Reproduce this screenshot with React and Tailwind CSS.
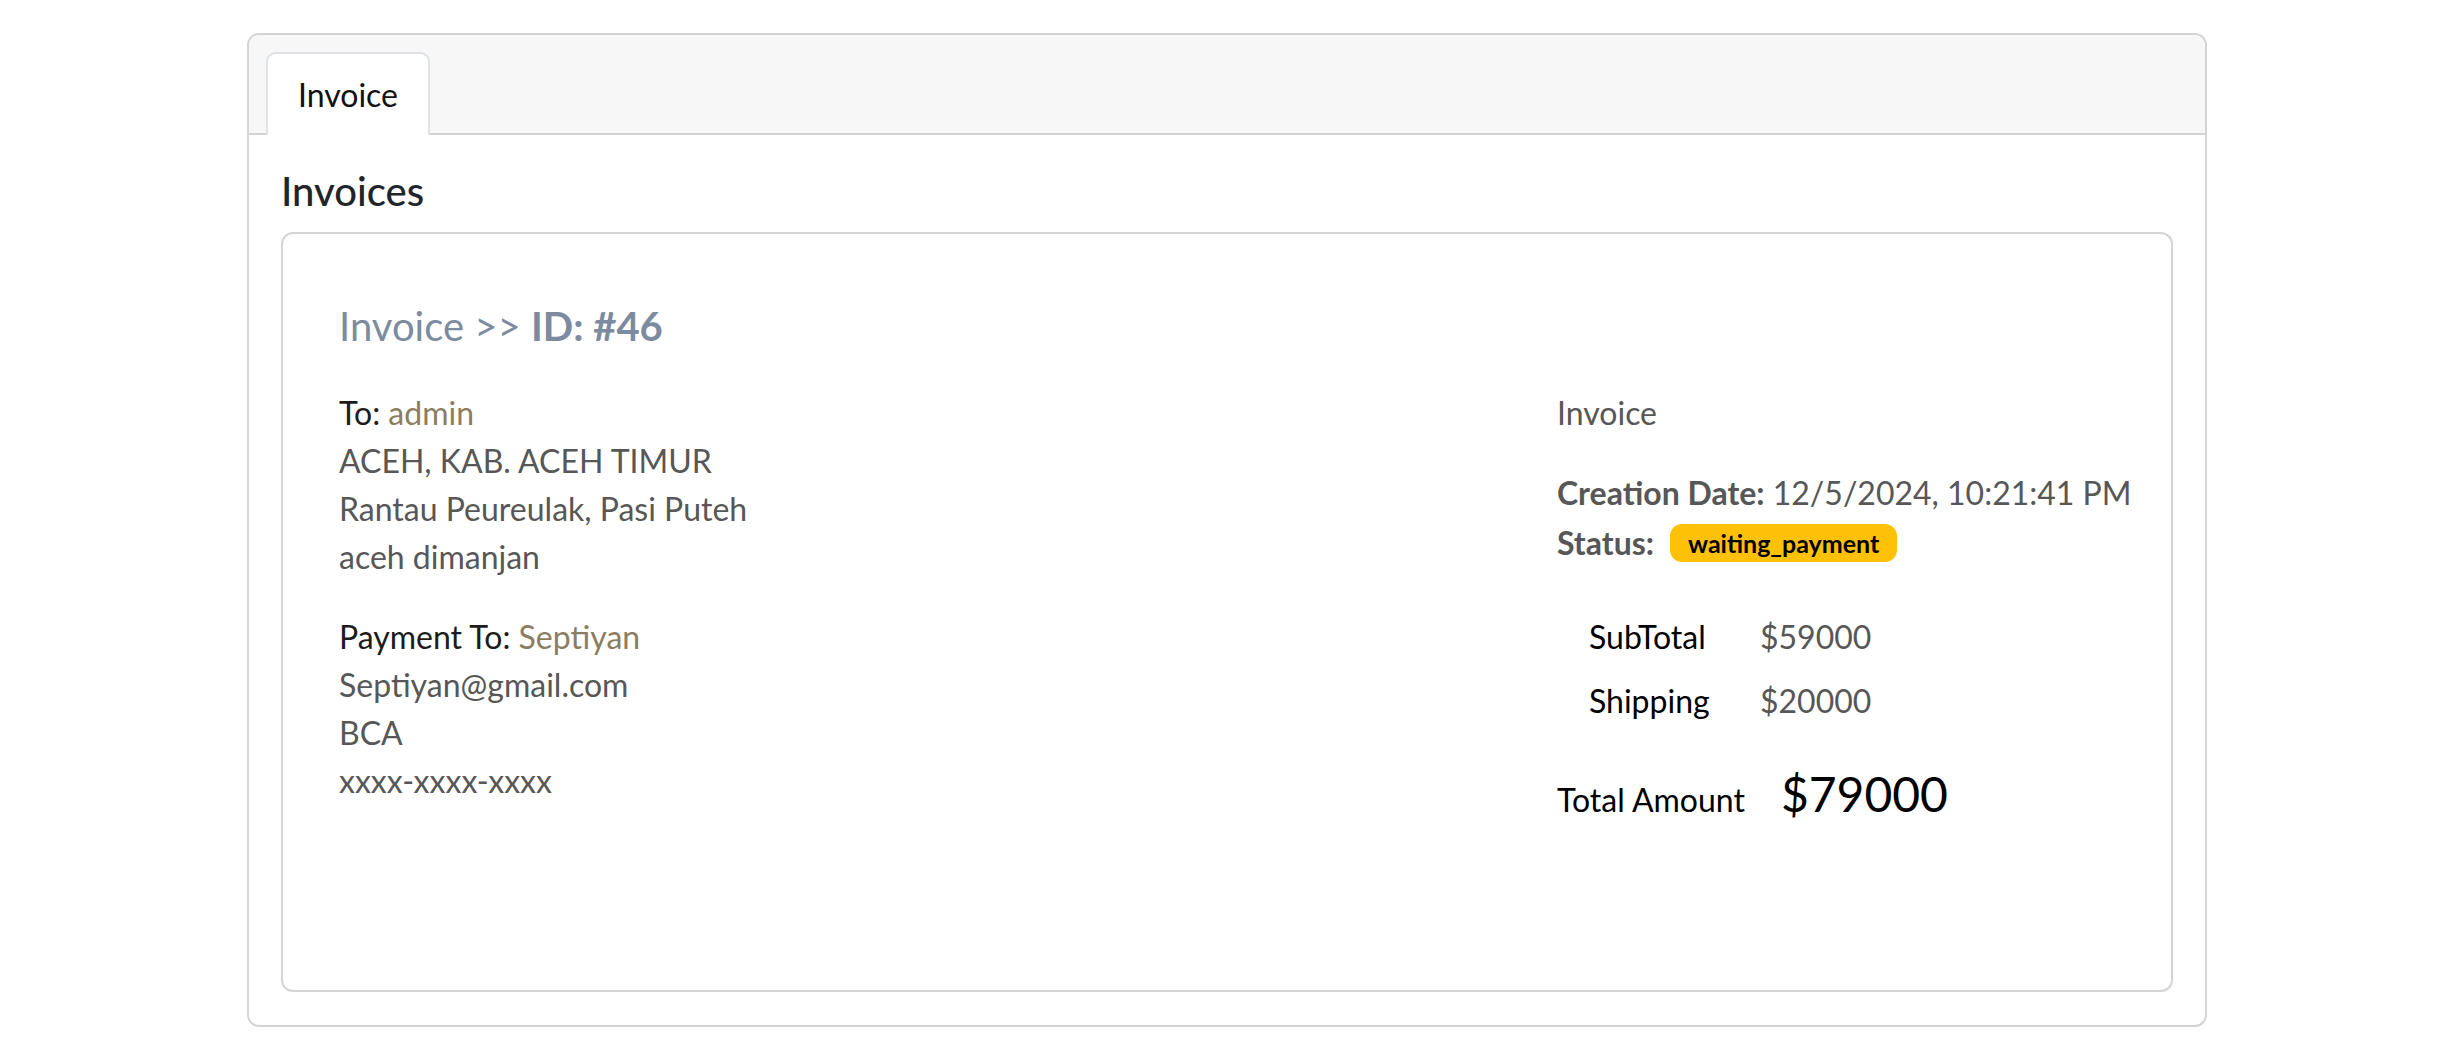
const leftLines = ["ACEH, KAB. ACEH TIMUR", "Rantau Peureulak, Pasi Puteh", "aceh dimanjan"];
const paymentLines = ["Septiyan@gmail.com", "BCA", "xxxx-xxxx-xxxx"];

const InvoiceDetail = () => {
  return (
    <div className="h-[760px] rounded-[12px] border-2 border-[#d4d4d4] px-[56px] pt-[68px]">
      <h3 className="text-[40px] leading-[48px] text-[#7c8ba0]">
        Invoice &gt;&gt; <span className="font-bold">ID: #46</span>
      </h3>

      <div className="mt-[39px] grid grid-cols-[1170px_1fr] gap-x-[48px] text-[32px] leading-[48px] text-[#575757]">
        <div>
          <p>
            <span className="text-[#1c1c1c]">To: </span>
            <span className="text-[#8b7d5f]">admin</span>
          </p>
          {leftLines.map((line) => (
            <p key={line}>{line}</p>
          ))}

          <p className="mt-[32px]">
            <span className="text-[#1c1c1c]">Payment To: </span>
            <span className="text-[#8b7d5f]">Septiyan</span>
          </p>
          {paymentLines.map((line) => (
            <p key={line}>{line}</p>
          ))}
        </div>

        <div>
          <p>Invoice</p>
          <p className="mt-[32px] whitespace-nowrap">
            <span className="font-bold">Creation Date:</span> 12/5/2024, 10:21:41 PM
          </p>
          <div className="flex h-[52px] items-center">
            <span className="font-bold">Status:</span>
            <span className="ml-[16px] rounded-[12px] bg-[#ffc107] px-[18px] text-[25px] font-bold leading-[38px] text-black">
              waiting_payment
            </span>
          </div>

          <div className="mt-[36px]">
            <div className="flex h-[64px] items-center">
              <span className="w-[203px] pl-[32px] text-black">SubTotal</span>
              <span>$59000</span>
            </div>
            <div className="flex h-[64px] items-center">
              <span className="w-[203px] pl-[32px] text-black">Shipping</span>
              <span>$20000</span>
            </div>
          </div>

          <div className="mt-[29px] flex items-baseline text-black">
            <span>Total Amount</span>
            <span className="ml-[36px] text-[48px] leading-[64px]">$79000</span>
          </div>
        </div>
      </div>
    </div>
  );
};

export default function App() {
  return (
    <div className="min-h-screen bg-white pt-[33px] font-['Lato',_sans-serif]">
      <div className="mx-auto w-[1960px] overflow-hidden rounded-[12px] border-2 border-[#d4d4d4]">
        <div className="flex h-[100px] items-end border-b-2 border-[#d4d4d4] bg-[#f7f7f7] px-[17px]">
          <div className="-mb-[2px] flex h-[83px] w-[164px] items-center justify-center rounded-t-[10px] border-2 border-b-0 border-[#dee2e6] bg-white text-[32px] text-[#111]">
            Invoice
          </div>
        </div>

        <div className="px-[32px] pb-[33px] pt-[32px]">
          <h2 className="mb-[17px] text-[40px] font-medium leading-[48px] text-[#212529]">
            Invoices
          </h2>
          <InvoiceDetail />
        </div>
      </div>
    </div>
  );
}
